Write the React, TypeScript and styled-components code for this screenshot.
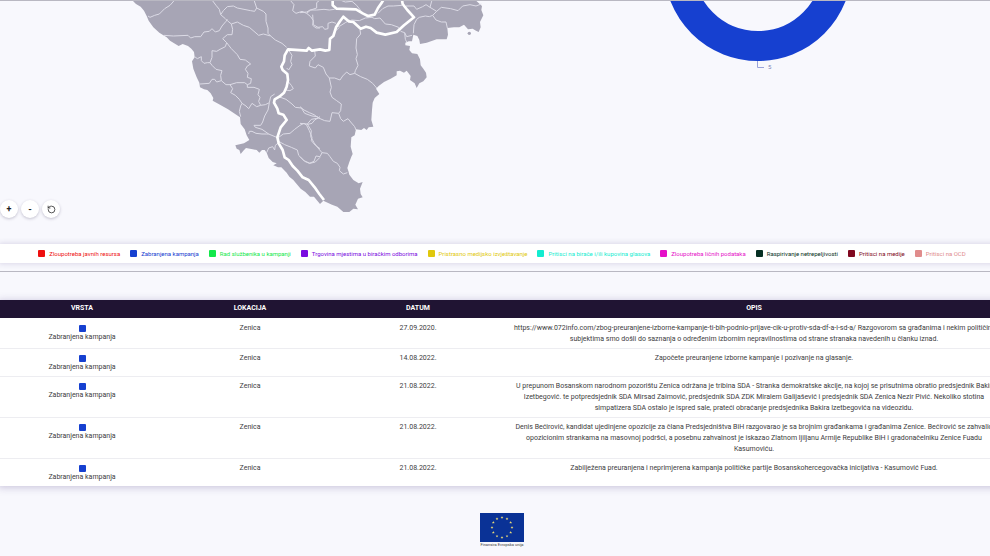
import React from "react";
import styled, { createGlobalStyle } from "styled-components";
import { RotateCcw } from "lucide-react";

const GlobalStyle = createGlobalStyle`
  * { box-sizing: border-box; }
  html { background: #f8f8fd; }
  body {
    margin: 0;
    overflow: hidden;
    color: #3c3c40;
    font-family: Roboto, "Liberation Sans", sans-serif;
    font-size: 7px;
    line-height: 11px;
  }
`;

const Page = styled.main`
  display: flex;
  flex-direction: column;
  margin: 0 -16px 0 -2px;
`;

const Divider = styled.hr`
  width: 100%;
  margin: 0;
  border: 0;
  border-top: 1px solid #b9b8c2;
`;

const Overview = styled.section`
  display: grid;
  grid-template-columns: 1fr 1fr;
  padding-bottom: 25px;
`;

const MapPane = styled.div`
  display: flex;
  align-items: flex-end;
  gap: 70px;
`;

const ChartPane = styled.div`
  display: flex;
  justify-content: center;
  padding-left: 8px;
`;

const MapControls = styled.div`
  display: flex;
  gap: 3px;
  padding: 0 0 1px 2px;
`;

const RoundButton = styled.button`
  display: flex;
  align-items: center;
  justify-content: center;
  width: 18px;
  height: 18px;
  padding: 0;
  border: 0;
  border-radius: 50%;
  background: #fff;
  color: #222;
  font: 700 9px/10px Roboto, sans-serif;
  box-shadow: 0 1px 3px rgba(40, 30, 70, 0.25);
`;

const Drawing = styled.svg`
  display: block;
  flex: none;
`;

const LegendBar = styled.ul`
  display: flex;
  justify-content: center;
  align-items: center;
  gap: 10px;
  height: 19px;
  margin: 0 0 8px;
  padding: 0;
  list-style: none;
  background: #fff;
  box-shadow: 0 0 6px rgba(60, 40, 120, 0.2);
`;

const LegendItem = styled.li<{ $color: string }>`
  display: flex;
  align-items: center;
  gap: 4px;
  color: ${(p) => p.$color};
  font-size: 6px;
  line-height: 8px;
  white-space: nowrap;
`;

const Swatch = styled.span<{ $color: string }>`
  display: block;
  flex: none;
  width: 7px;
  height: 7px;
  border-radius: 1px;
  background: ${(p) => p.$color};
`;

const ReportTable = styled.table`
  width: 100%;
  margin-top: 28px;
  border-collapse: collapse;
  table-layout: fixed;
  background: #fff;
  text-align: center;
  box-shadow: 0 1px 8px rgba(60, 40, 120, 0.28);
`;

const HeadCell = styled.th<{ $wide?: boolean }>`
  width: ${(p) => (p.$wide ? "50%" : "auto")};
  height: 18px;
  padding: 0 0 1px;
  background: #201433;
  color: #fff;
  font-size: 7px;
  font-weight: 700;
`;

const Row = styled.tr`
  & + & td { box-shadow: inset 0 1px 0 #ededf1; }
`;

const Cell = styled.td`
  padding: 5px 10px 3px;
  vertical-align: top;
`;

const Kind = styled.div`
  display: flex;
  flex-direction: column;
  align-items: center;
  padding-top: 2px;
`;

const Footer = styled.footer`
  display: flex;
  flex-direction: column;
  align-items: center;
  padding-top: 27px;
  font-size: 4px;
  line-height: 5px;
`;

const legend = [
  ["Zloupotreba javnih resursa", "#ee0f0f"],
  ["Zabranjena kampanja", "#1640d0"],
  ["Rad službenika u kampanji", "#12e84a"],
  ["Trgovina mjestima u biračkim odborima", "#7a0be0"],
  ["Pristrasno medijsko izvještavanje", "#e0c80c"],
  ["Pritisci na birače i/ili kupovina glasova", "#12ecd0"],
  ["Zloupotreba ličnih podataka", "#e510c8"],
  ["Raspirivanje netrepeljivosti", "#063024"],
  ["Pritisci na medije", "#800820"],
  ["Pritisci na OCD", "#e08c8c"],
];

const reports = [
  {
    date: "27.09.2020.",
    text: "https://www.072info.com/zbog-preuranjene-izborne-kampanje-ti-bih-podnio-prijave-cik-u-protiv-sda-df-a-i-sd-a/ Razgovorom sa građanima i nekim političim subjektima smo došli do saznanja o određenim izbornim nepravilnostima od strane stranaka navedenih u članku iznad.",
  },
  { date: "14.08.2022.", text: "Započete preuranjene izborne kampanje i pozivanje na glasanje." },
  {
    date: "21.08.2022.",
    text: "U prepunom Bosanskom narodnom pozorištu Zenica održana je tribina SDA - Stranka demokratske akcije, na kojoj se prisutnima obratio predsjednik Bakir Izetbegović. te potpredsjednik SDA Mirsad Zaimović, predsjednik SDA ZDK Miralem Galijašević i predsjednik SDA Zenica Nezir Pivić. Nekoliko stotina simpatizera SDA ostalo je ispred sale, prateći obraćanje predsjednika Bakira Izetbegovića na videozidu.",
  },
  {
    date: "21.08.2022.",
    text: "Denis Bećirović, kandidat ujedinjene opozicije za člana Predsjedništva BiH razgovarao je sa brojnim građankama i građanima Zenice. Bećirović se zahvalio opozicionim strankama na masovnoj podršci, a posebnu zahvalnost je iskazao Zlatnom ljiljanu Armije Republike BiH i gradonačelniku Zenice Fuadu Kasumoviću.",
  },
  {
    date: "21.08.2022.",
    text: "Zabilježena preuranjena i neprimjerena kampanja političke partije Bosanskohercegovačka inicijativa - Kasumović Fuad.",
  },
];

const COAST =
  "M36,0 48,12 62,20 72,32 80,48 86,62 100,82 118,98 140,112 150,122 176,138 188,132 204,138 214,146 222,156 224,172 216,184 220,206 230,232 238,248 240,262 252,268 262,270 272,280 280,294 278,302 300,314 324,328 342,340 360,352 362,372 374,388 380,406 388,420 372,430 346,436 350,446 358,450 362,462 370,452 378,444 398,448 410,450 418,458 426,450 434,450 440,458 446,474 458,486 470,490 460,496 474,502 484,502 500,518 508,530 520,540 530,552 542,566 556,576 570,590 582,590 600,612 610,602 618,606 636,614 652,620 670,636 688,636 700,626 714,628 706,614 714,596 728,592 722,582 720,566 728,546 716,550 700,540 688,524 686,516 682,504 688,486 694,470 698,462 692,440 694,412 704,406 708,388 724,390 732,384 740,390 746,382 760,380 754,360 756,330 758,308 764,294 778,282 768,266 776,258 792,246 812,236 830,226 830,214 840,212 852,218 860,212 872,228 870,240 884,250 890,264 898,250 910,244 920,232 918,218 910,206 902,196 900,178 892,162 876,160 868,150 870,138 856,136 856,128 866,124 876,124 880,104 892,108 898,120 900,132 920,128 950,118 980,118 984,104 982,84 1002,82 1018,82 1032,74 1044,88 1058,86 1068,92 1076,96 1082,82 1080,66 1090,46 1084,30 1086,18 1070,4 1068,0Z";

const WEST_BORDERS =
  "M164,0 150,16 134,26 118,42 104,46 90,52 84,48 M132,106 160,108 204,106 212,114 224,110 242,110 252,96 268,94 276,86 286,96 298,92 306,78 318,64 322,58 M276,0 288,16 298,28 302,44 310,32 322,20 340,18 352,24 372,28 392,32 404,34 410,24 402,0 M410,24 430,34 438,42 438,64 444,84 444,100 452,108 M302,44 316,56 322,62 334,72 352,66 370,76 388,82 402,94 416,106 430,102 452,108 466,120 486,130 500,142 M334,72 338,88 336,104 322,104 308,116 320,128 316,140 300,148 290,154 276,152 276,172 270,188 262,188 252,190 244,182 244,170 232,176 224,170 M320,128 334,146 352,164 360,178 376,180 392,192 382,198 376,208 384,220 382,232 394,236 392,250 382,254 374,248 350,248 330,254 318,254 304,242 302,226 306,212 288,208 276,196 270,188 M304,242 290,246 284,238 276,238 268,250 240,252 M330,254 338,266 332,278 346,286 358,298 366,310 378,318 386,326 396,310 410,320 422,316 416,304 420,292 414,284 418,268 402,262 382,262 382,254 M362,350 358,334 362,318 366,310 M422,316 436,314 448,308 452,290 464,282 M448,308 444,330 434,348 428,366 422,376 402,376 406,382 426,388 446,402 470,412 M386,402 388,394 396,394 408,400 426,402 440,402 446,402 M440,458 446,444 458,440 464,450 466,436 476,428 476,412 M476,412 490,402 510,400 524,388 540,376 552,370 560,376 568,392 576,412 574,422 586,436 600,446 M476,290 498,298 516,312 526,322 544,324 554,340 576,348 592,350 600,356 M476,424 494,434 514,442 532,450 536,466 552,482 570,490 586,486 600,472 M560,374 576,370 584,360 600,350 M506,150 516,166 512,184 516,194 506,210 500,204 M504,244 514,256 520,266 510,272 496,270 M510,0 522,14 518,32 528,40 546,34 560,40 572,50 580,62 578,76 588,84 600,84 M560,40 572,30 590,24 590,8 600,0";

const EAST_BORDERS =
  "M0,38 20,36 30,30 50,30 72,28 88,30 104,28 M38,44 40,74 54,82 68,80 74,88 84,86 84,70 96,66 108,70 M44,152 46,168 30,184 28,198 46,204 54,194 70,202 78,222 88,234 104,234 120,240 128,228 140,216 150,224 164,220 M180,90 182,102 170,116 168,144 172,164 168,176 174,196 166,212 164,220 182,230 202,238 218,250 230,264 M88,234 94,262 90,276 96,292 110,302 124,312 122,332 116,340 96,338 90,364 74,362 56,354 34,358 22,372 0,370 M0,320 12,330 28,338 42,344 56,354 M116,340 122,356 130,364 144,356 152,366 164,380 168,390 M22,372 34,392 32,410 42,428 54,444 66,458 60,470 48,468 42,484 28,490 14,484 0,470 M66,458 82,460 90,470 100,484 112,490 120,502 118,512 130,522 142,518 M108,80 120,78 136,68 150,60 M108,92 118,82 M154,60 178,62 196,54 216,52 224,56 240,54 256,72 274,74 296,82 300,92 M120,0 136,6 156,4 170,16 184,34 200,48 M234,40 248,26 264,18 280,18 306,16 M318,18 342,18 350,28 368,20 378,14 390,22 396,0 M390,22 410,34 424,22 452,26 474,32 488,18 510,14 528,18 544,12 M410,34 398,46 388,50 376,48 358,52 350,58 342,74 340,100 M398,46 408,60 424,66 438,66 442,84 M302,94 314,98 320,110 336,106 M314,98 316,118 320,126";

const ENTITY_LINE =
  "M612,600 598,582 584,562 566,540 548,532 532,512 518,498 506,480 494,472 488,450 476,430 472,412 476,400 482,382 500,360 490,344 476,340 472,326 462,308 464,298 478,290 492,278 500,260 504,240 502,222 488,210 484,200 492,184 494,166 504,148 560,152 566,144 576,152 600,148 616,152 628,150 630,116 640,108 648,82 660,64 670,50 686,64 700,66 722,86 738,80 752,84 770,98 796,104 830,96 852,76 882,52 862,30 848,12 846,0 M638,0 638,16 650,26 708,28 728,40 744,48 764,44 774,24 784,10 790,0";

function MapDrawing() {
  return (
    <Drawing width="360" height="218" viewBox="30 3 1080 654" role="img" aria-label="Mapa">
      <path d={COAST} fill="#a7a5b5" />
      <circle cx="1048" cy="100" r="5" fill="#a7a5b5" />
      <g fill="none" stroke="#dcdbe6" strokeWidth="3" strokeLinejoin="round">
        <path d={WEST_BORDERS} />
        <path d={EAST_BORDERS} transform="translate(540 0)" />
      </g>
      <path d={ENTITY_LINE} fill="none" stroke="#fff" strokeWidth="8" strokeLinejoin="round" />
    </Drawing>
  );
}

function Donut() {
  return (
    <Drawing width="200" height="80" viewBox="0 1 200 80" role="img" aria-label="Zabranjena kampanja: 5">
      <circle cx="100" cy="-33" r="79" fill="none" stroke="#1640d0" strokeWidth="30" />
      <path d="M99.5,61V67.5H106" fill="none" stroke="#9aa3da" />
      <text x="110" y="69" fontSize="6" fill="#7d84b8">5</text>
    </Drawing>
  );
}

const STAR = "M0,-1.5 .4,-.5 1.4,-.5 .6,.2 .9,1.2 0,.6 -.9,1.2 -.6,.2 -1.4,-.5 -.4,-.5Z";

function EuFlag() {
  return (
    <Drawing width="44" height="29" viewBox="0 0 44 29" role="img" aria-label="Evropska unija">
      <rect width="44" height="29" fill="#0a3296" />
      {Array.from({ length: 12 }, (_, i) => {
        const a = (i * Math.PI) / 6;
        return (
          <path
            key={i}
            d={STAR}
            fill="#e8d878"
            transform={`translate(${22 + 10 * Math.sin(a)} ${14.5 - 10 * Math.cos(a)})`}
          />
        );
      })}
    </Drawing>
  );
}

export default function App() {
  return (
    <>
      <GlobalStyle />
      <Page>
        <Divider />
        <Overview>
          <MapPane>
            <MapControls>
              <RoundButton aria-label="Uvećaj">+</RoundButton>
              <RoundButton aria-label="Umanji">-</RoundButton>
              <RoundButton aria-label="Vrati prikaz">
                <RotateCcw size={9} strokeWidth={2} />
              </RoundButton>
            </MapControls>
            <MapDrawing />
          </MapPane>
          <ChartPane>
            <Donut />
          </ChartPane>
        </Overview>
        <LegendBar>
          {legend.map(([label, color]) => (
            <LegendItem key={label} $color={color}>
              <Swatch $color={color} />
              {label}
            </LegendItem>
          ))}
        </LegendBar>
        <Divider />
        <ReportTable>
          <thead>
            <tr>
              <HeadCell>VRSTA</HeadCell>
              <HeadCell>LOKACIJA</HeadCell>
              <HeadCell>DATUM</HeadCell>
              <HeadCell $wide>OPIS</HeadCell>
            </tr>
          </thead>
          <tbody>
            {reports.map((report) => (
              <Row key={report.text}>
                <Cell>
                  <Kind>
                    <Swatch $color="#1640d0" />
                    Zabranjena kampanja
                  </Kind>
                </Cell>
                <Cell>Zenica</Cell>
                <Cell>{report.date}</Cell>
                <Cell>{report.text}</Cell>
              </Row>
            ))}
          </tbody>
        </ReportTable>
        <Footer>
          <EuFlag />
          Finansira Evropska unija
        </Footer>
      </Page>
    </>
  );
}
